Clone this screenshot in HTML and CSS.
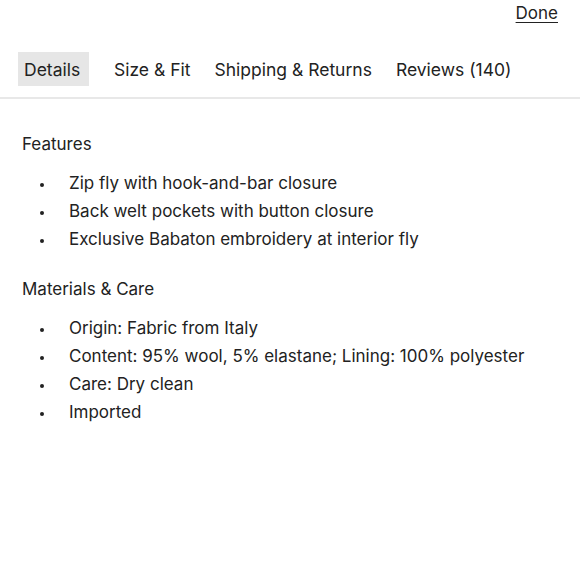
FILE: index.html
```html
<!DOCTYPE html>
<html>
<head>
<meta charset="utf-8">
<link rel="stylesheet" href="styles.css">
</head>
<body>
<div class="top">
  <a class="done" href="#">Done</a>
</div>
<nav class="tabs">
  <span class="tab active">Details</span>
  <span class="tab">Size &amp; Fit</span>
  <span class="tab">Shipping &amp; Returns</span>
  <span class="tab">Reviews (140)</span>
</nav>
<main class="content">
  <h2 class="heading">Features</h2>
  <ul class="list">
    <li>Zip fly with hook-and-bar closure</li>
    <li>Back welt pockets with button closure</li>
    <li>Exclusive Babaton embroidery at interior fly</li>
  </ul>
  <h2 class="heading">Materials &amp; Care</h2>
  <ul class="list">
    <li>Origin: Fabric from Italy</li>
    <li>Content: 95% wool, 5% elastane; Lining: 100% polyester</li>
    <li>Care: Dry clean</li>
    <li>Imported</li>
  </ul>
</main>
</body>
</html>
```
FILE: styles.css
```css
* { box-sizing: border-box; }
html, body { margin: 0; padding: 0; background: #fff; }
body {
  font-family: "Inter", "Lato", sans-serif;
  font-size: 17px;
  color: #222;
  width: 580px;
}
.top {
  display: flex;
  justify-content: flex-end;
  padding: 3px 22px 0 0;
  height: 52px;
}
.done {
  color: #222;
  font-size: 17px;
  text-decoration: underline;
  text-underline-offset: 3px;
  line-height: 20px;
}
.tabs {
  display: flex;
  align-items: center;
  gap: 12px;
  padding: 0 0 11px 18px;
  border-bottom: 2px solid #e8e8e8;
  font-size: 17.5px;
}
.tab {
  padding: 0 6px;
  height: 34px;
  line-height: 35px;
}
.active { background: #e6e6e6; margin-right: 7px; width: 71px; }
.content { padding: 35px 0 0 22px; }
.heading {
  margin: 0;
  font-size: 17px;
  font-weight: 400;
  line-height: 20px;
}
.list {
  list-style: none;
  margin: 15px 0 26px;
  padding: 0 0 0 18px;
}
.list li {
  display: flex;
  line-height: 28px;
}
.list li::before {
  content: "";
  width: 4px;
  height: 4px;
  border-radius: 50%;
  background: #222;
  margin: 14px 25px 0 0;
  flex: none;
}
```
